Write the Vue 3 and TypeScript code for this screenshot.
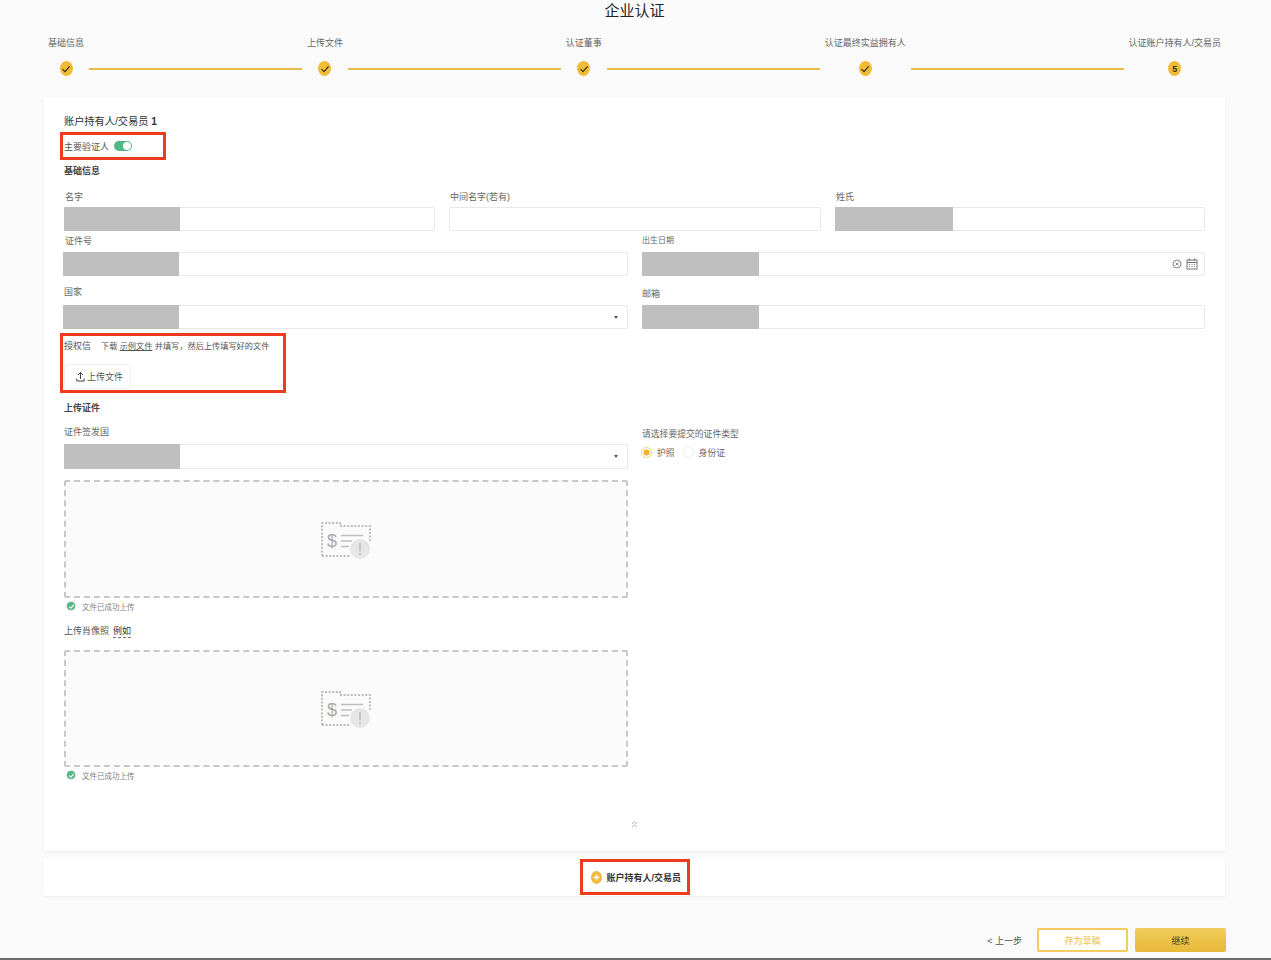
<script setup lang="ts">
interface Step { label: string; done: boolean; num?: number }
const steps: Step[] = [
  { label: '基础信息', done: true },
  { label: '上传文件', done: true },
  { label: '认证董事', done: true },
  { label: '认证最终实益拥有人', done: true },
  { label: '认证账户持有人/交易员', done: false, num: 5 },
]
const drops = [0, 1]
</script>

<template>
  <div class="page">
    <h1 class="title">企业认证</h1>

    <div class="steps">
      <template v-for="(s, i) in steps" :key="s.label">
        <div class="step">
          <span class="step-label">{{ s.label }}</span>
          <span class="step-dot">
            <svg v-if="s.done" width="10" height="10" viewBox="0 0 10 10"><path d="M1.5 5.2 4 7.6 8.6 2.4" fill="none" stroke="#2f2a1a" stroke-width="1.1" /></svg>
            <template v-else>{{ s.num }}</template>
          </span>
        </div>
        <div v-if="i < steps.length - 1" class="connector"></div>
      </template>
    </div>

    <section class="card">
      <div class="holder">账户持有人/交易员 <b>1</b></div>
      <div class="mark mark-primary">
        <span>主要验证人</span>
        <span class="toggle"><span class="knob"></span></span>
      </div>
      <div class="section-title first">基础信息</div>

      <div class="row three r1">
        <div class="field"><label>名字</label><div class="input"><span class="mask"></span></div></div>
        <div class="field"><label>中间名字(若有)</label><div class="input"></div></div>
        <div class="field"><label>姓氏</label><div class="input"><span class="mask wide"></span></div></div>
      </div>

      <div class="row two r2">
        <div class="field shift"><label>证件号</label><div class="input"><span class="mask"></span></div></div>
        <div class="field">
          <label class="tiny">出生日期</label>
          <div class="input">
            <span class="mask mid"></span>
            <span class="suffix">
              <svg width="10" height="10" viewBox="0 0 10 10"><circle cx="5" cy="5" r="4" fill="none" stroke="#8c8c8c" /><path d="M3.4 3.4 6.6 6.6M6.6 3.4 3.4 6.6" stroke="#8c8c8c" /></svg>
              <svg width="12" height="12" viewBox="0 0 12 12"><rect x="1" y="2" width="10" height="9" fill="none" stroke="#777" /><path d="M1 4.5H11M3.5 .5V3M8.5 .5V3" stroke="#777" /><path d="M3 6.5H4M5.5 6.5H6.5M8 6.5H9M3 8.5H4M5.5 8.5H6.5M8 8.5H9" stroke="#888" /></svg>
            </span>
          </div>
        </div>
      </div>

      <div class="row two r3">
        <div class="field shift">
          <label class="gap">国家</label>
          <div class="input"><span class="mask"></span><span class="caret"></span></div>
        </div>
        <div class="field">
          <label class="mail">邮箱</label>
          <div class="input"><span class="mask mid"></span></div>
        </div>
      </div>

      <div class="mark mark-auth">
        <div class="auth-text">
          <span class="auth-name">授权信</span>
          <span>下载 <a class="link">示例文件</a> 并填写，然后上传填写好的文件</span>
        </div>
        <button class="upload" type="button">
          <svg width="9" height="11" viewBox="0 0 9 11"><path d="M4.5 8V1.5M2 4 4.5 1.5 7 4M.8 7.5V10H8.2V7.5" fill="none" stroke="#444" /></svg>
          上传文件
        </button>
      </div>

      <div class="section-title second">上传证件</div>

      <div class="row two r4">
        <div class="field">
          <label class="issue">证件签发国</label>
          <div class="input tall"><span class="mask"></span><span class="caret"></span></div>
        </div>
        <div class="field">
          <label class="type">请选择要提交的证件类型</label>
          <div class="radios">
            <span class="radio on"></span><span class="radio-text">护照</span>
            <span class="radio off"></span><span class="radio-text">身份证</span>
          </div>
        </div>
      </div>

      <template v-for="d in drops" :key="d">
        <div v-if="d === 1" class="portrait">
          <span>上传肖像照</span><span class="example">例如</span>
        </div>
        <div class="drop" :class="{ second: d === 1 }">
          <svg class="doc" width="50" height="38" viewBox="0 0 50 38">
            <path d="M1 34V1H19V4H49V19" fill="none" stroke="#bdbdbd" stroke-width="2" stroke-dasharray="2 1.6" />
            <path d="M1 34H30" fill="none" stroke="#bdbdbd" stroke-width="2" stroke-dasharray="2 1.6" />
            <text x="11" y="25" text-anchor="middle" class="dollar">$</text>
            <path d="M20 13.5H42M20 19H31M20 24.5H28" stroke="#bdbdbd" stroke-width="1.6" />
            <circle cx="39" cy="27" r="10" fill="#e6e6e6" />
            <path d="M39 21V29.5M39 31V33" stroke="#b3b3b3" stroke-width="1.3" />
          </svg>
        </div>
        <div class="success">
          <span class="ok">
            <svg width="7" height="7" viewBox="0 0 7 7"><path d="M1.2 3.6 2.9 5.2 5.8 1.9" fill="none" stroke="#fff" stroke-width="1.1" /></svg>
          </span>
          <span>文件已成功上传</span>
        </div>
      </template>

      <div class="collapse">
        <svg width="7" height="7" viewBox="0 0 7 7"><path d="M1 3 3.5 .8 6 3M1 6.2 3.5 4 6 6.2" fill="none" stroke="#a8a8a8" stroke-width=".9" /></svg>
      </div>
    </section>

    <section class="add-card">
      <div class="mark mark-add">
        <span class="plus">
          <svg width="11" height="13" viewBox="0 0 11 13"><path d="M5.5 3.5V9.5M2.5 6.5H8.5" stroke="#fff" stroke-width="1.4" /></svg>
        </span>
        <span>账户持有人/交易员</span>
      </div>
    </section>

    <div class="footer">
      <span class="back">&lt; 上一步</span>
      <button class="btn outline" type="button">存为草稿</button>
      <button class="btn solid" type="button">继续</button>
    </div>
    <div class="bottom-bar"></div>
  </div>
</template>

<style scoped>
.page {
  box-sizing: border-box;
  width: 1271px;
  height: 960px;
  overflow: hidden;
  padding: 0 46px 0 44px;
  background: #fafafa;
  color: #4a4a4a;
  font-family: "Liberation Sans", "Noto Sans CJK SC", sans-serif;
  font-size: 9px;
  position: relative;
}
.title {
  margin: 0;
  padding: 1px 0 0 0;
  text-align: center;
  font-size: 15px;
  line-height: 20px;
  font-weight: 400;
  color: #222;
}
.steps {
  display: flex;
  align-items: flex-end;
  margin: 15px 4px 0 4px;
  height: 40px;
}
.step {
  display: flex;
  flex-direction: column;
  align-items: center;
  flex: none;
}
.step-label { line-height: 13px; color: #666; white-space: nowrap; }
.step-dot {
  width: 13px;
  height: 15px;
  margin-top: 11px;
  border-radius: 50%;
  background: #f0bc36;
  color: #3a3010;
  display: flex;
  align-items: center;
  justify-content: center;
  font-size: 9px;
  font-weight: 700;
}
.connector {
  flex: 1;
  height: 2px;
  margin: 0 5px 6px;
  background: #e8bb4d;
}
.card {
  box-sizing: border-box;
  height: 754px;
  margin-top: 21px;
  padding: 17px 20px 0;
  background: #fff;
  box-shadow: 0 1px 2px rgba(0, 0, 0, .06);
}
.holder {
  font-size: 10.2px;
  line-height: 16px;
  color: #333;
}
.mark {
  box-sizing: border-box;
  border: 3px solid #ee3a1e;
}
.mark-primary {
  display: flex;
  align-items: center;
  width: 106px;
  height: 28px;
  margin: 2px 0 0 -4px;
  padding-left: 1px;
  color: #555;
}
.toggle {
  width: 18px;
  height: 10px;
  margin-left: 5px;
  border-radius: 5px;
  background: #4fb985;
  display: flex;
  align-items: center;
  justify-content: flex-end;
  padding-right: 1px;
  box-sizing: border-box;
}
.knob { width: 8px; height: 8px; border-radius: 50%; background: #fff; }
.section-title {
  font-weight: 700;
  line-height: 12px;
  color: #444;
}
.section-title.first { margin-top: 5px; }
.section-title.second { margin-top: 9px; }
.row { display: grid; column-gap: 14px; }
.three { grid-template-columns: 371px 372px 370px; }
.two { grid-template-columns: 564px 563px; }
.r1 { margin-top: 14px; }
.r1 label { padding-left: 1px; }
.r2 { margin-top: 4px; }
.r3 { margin-top: 10px; }
.r4 { margin-top: 12px; }
.field label {
  display: block;
  line-height: 12px;
  height: 12px;
  margin-bottom: 4px;
  color: #666;
}
.r2 .field label { margin-bottom: 5px; }
.r2 .shift label { padding-left: 2px; }
.tiny { font-size: 8px; }
.field label.gap { margin-bottom: 7px; padding-left: 1px; }
.field label.mail { margin: 2px 0 5px 0; }
.field label.issue { margin-bottom: 6px; }
.field label.type { margin: 2px 0 6px; font-size: 8.8px; }
.shift { margin-left: -1px; width: 565px; }
.input {
  box-sizing: border-box;
  position: relative;
  display: flex;
  height: 24px;
  border: 1px solid #e8e8e8;
  border-radius: 2px;
  background: #fff;
}
.input.tall { height: 25px; }
.mask {
  width: 116px;
  margin: -1px 0 -1px -1px;
  background: #bfbfbf;
}
.mask.wide { width: 118px; }
.mask.mid { width: 117px; }
.suffix {
  margin-left: auto;
  display: flex;
  align-items: center;
  gap: 4px;
  padding-right: 6px;
}
.caret {
  margin: auto 9px auto auto;
  border: 2.5px solid transparent;
  border-top: 3px solid #555;
  border-bottom: 0;
}
.mark-auth {
  width: 226px;
  height: 60px;
  margin: 4px 0 0 -4px;
  padding: 4px 0 0 1px;
}
.auth-text { line-height: 12px; white-space: nowrap; color: #555; font-size: 8.2px; }
.auth-name { font-size: 9px; margin-right: 10px; }
.link { color: #555; text-decoration: underline; }
.upload {
  display: flex;
  align-items: center;
  gap: 2px;
  box-sizing: border-box;
  width: 67px;
  height: 25px;
  margin-top: 11px;
  padding: 0 0 0 11px;
  border: 1px solid #f3f3f3;
  border-radius: 2px;
  background: #fff;
  color: #555;
  font: inherit;
}
.radios {
  display: flex;
  align-items: center;
  height: 12px;
  font-size: 8.8px;
}
.radio {
  box-sizing: border-box;
  width: 11px;
  height: 11px;
  border-radius: 50%;
  flex: none;
}
.radio.on {
  border: 1px solid #f3cf7d;
  background: radial-gradient(circle, #eeb32b 0 2.8px, #fff 3.3px);
  margin-left: -1px;
}
.radio.off { border: 1px solid #f0f0f0; margin-left: 8px; }
.radio-text { margin-left: 5px; color: #666; }
.drop {
  box-sizing: border-box;
  display: flex;
  align-items: center;
  justify-content: center;
  height: 118px;
  margin-top: 11px;
  width: 564px;
  border: 2px dashed #c8c8c8;
  border-radius: 2px;
  background: #fbfbfb;
}
.drop.second { height: 117px; margin-top: 12px; }
.doc { margin-top: 3px; }
.dollar { font-size: 18px; fill: #a9a9a9; font-family: "Liberation Sans", sans-serif; }
.success {
  display: flex;
  align-items: center;
  height: 12px;
  margin-top: 2px;
  padding-left: 3px;
  font-size: 7.5px;
  color: #808080;
}
.ok {
  width: 8px;
  height: 8px;
  margin-right: 7px;
  border-radius: 50%;
  background: #4fb985;
  box-shadow: 0 0 0 1px #e3e3e3;
  display: flex;
  align-items: center;
  justify-content: center;
}
.portrait {
  display: flex;
  line-height: 12px;
  margin-top: 13px;
  color: #555;
}
.example {
  margin-left: 4px;
  color: #333;
  border-bottom: 1px dashed #777;
  height: 12px;
}
.collapse {
  display: flex;
  justify-content: center;
  margin-top: 40px;
  height: 7px;
}
.add-card {
  box-sizing: border-box;
  display: flex;
  justify-content: center;
  height: 37px;
  margin-top: 8px;
  background: #fff;
  box-shadow: 0 1px 2px rgba(0, 0, 0, .05);
}
.mark-add {
  display: flex;
  align-items: center;
  width: 110px;
  height: 36px;
  padding-left: 8px;
  font-weight: 700;
  color: #333;
}
.plus {
  width: 11px;
  height: 13px;
  margin-right: 5px;
  border-radius: 50%;
  background: #f0bc36;
  display: flex;
}
.footer {
  display: flex;
  align-items: center;
  justify-content: flex-end;
  height: 24px;
  margin: 32px -1px 0 0;
}
.back { margin-right: 15px; color: #555; }
.btn {
  box-sizing: border-box;
  height: 24px;
  border-radius: 2px;
  font: inherit;
  padding: 0;
}
.outline {
  width: 91px;
  margin-right: 7px;
  border: 2px solid #f2cb62;
  background: #fff;
  color: #f0c14b;
}
.solid {
  width: 91px;
  border: 0;
  background: linear-gradient(#f2cd5c, #e8b93a);
  color: #4a3f1a;
}
.bottom-bar {
  position: absolute;
  left: 0;
  right: 0;
  bottom: 0;
  height: 2px;
  background: #6b6b6b;
}
</style>

<style>
html, body { margin: 0; background: #fafafa; }
</style>
